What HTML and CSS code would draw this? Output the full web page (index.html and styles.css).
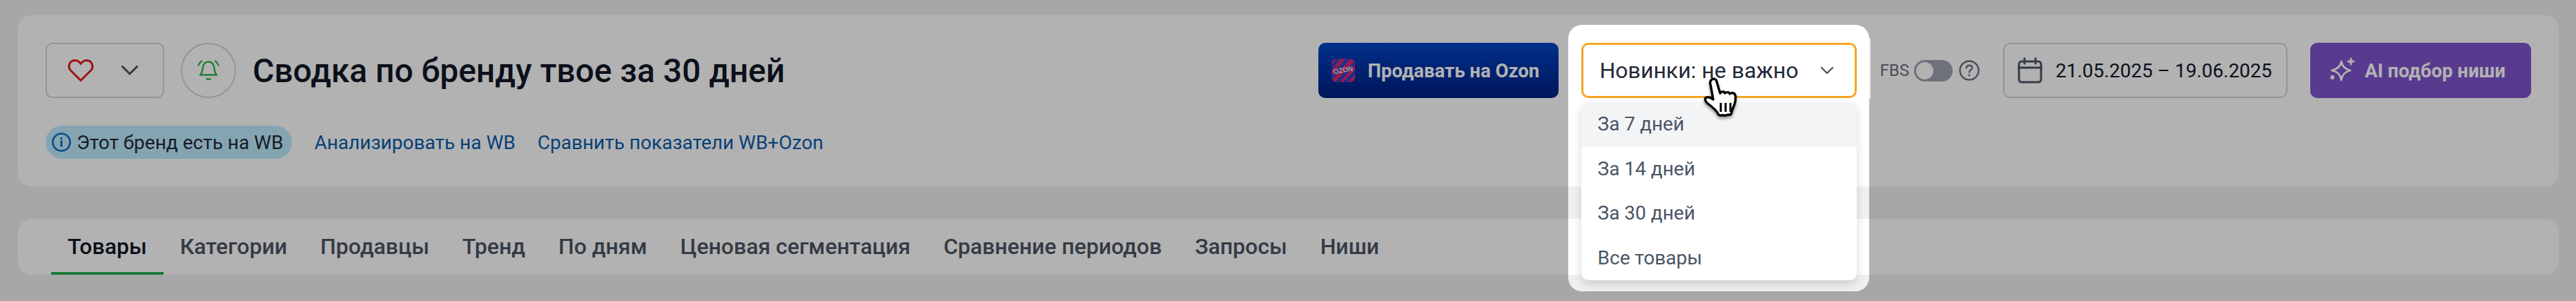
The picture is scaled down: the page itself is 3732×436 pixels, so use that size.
FILE: index.html
```html
<!DOCTYPE html>
<html lang="en">
<head>
    <meta charset="UTF-8">
    <meta name="viewport" content="width=device-width, initial-scale=1.0">
    <title>Сводка по бренду</title>
    <link rel="stylesheet" href="styles.css">
</head>
<body>
    <!-- Header card -->
    <div class="card header-card">
        <div class="top-row">
            <div class="fav-button">
                <svg class="heart" width="38" height="34" viewBox="0 0 38 34" fill="none"><path d="M19 31.500 4.500 17.200C-.5 12 2.500 3 10 2.500c4-.2 7 1.700 9 5 2-3.300 5-5.200 9-5 7.500.5 10.500 9.500 5.500 14.700Z" stroke="#e01b1b" stroke-width="3" stroke-linejoin="round"/></svg>
                <svg class="chev" width="24" height="14" viewBox="0 0 24 14" fill="none"><path d="M1.500 1.500 12 12 22.500 1.500" stroke="#4b5563" stroke-width="3" stroke-linecap="round" stroke-linejoin="round"/></svg>
            </div>
            <div class="bell-button">
                <svg width="32" height="32" viewBox="0 0 32 32" fill="none" stroke="#2cb84e" stroke-width="2.400" stroke-linecap="round" stroke-linejoin="round"><path d="M4 22.500h24c-2.500-2-3-5-3.500-9C24 7.500 21 3.500 16 3.500S8 7.500 7.500 13.500c-.5 4-1 7-3.500 9Z"/><path d="M13.500 28c1.500 1.200 3.500 1.200 5 0"/><path d="M6 2.500C3.800 4 2.500 6 1.500 8.500M26 2.500c2.200 1.500 3.500 3.500 4.500 6"/></svg>
            </div>
            <h1 class="title">Сводка по бренду твое за 30 дней</h1>
            <div class="actions">
                <div class="ozon-button">
                    <svg class="ozon-logo" width="36" height="34" viewBox="0 0 36 34"><rect x="1" y="0" width="34" height="34" rx="7" fill="#d02a70"/><path d="M8 0h6L1 16v-7ZM22 0h6L1 31v-7ZM34 4v6L13 34H7ZM35 17v6L24 34h-6Z" fill="#2a3fd0"/><text x="18" y="20" class="ozon-logo-text" transform="rotate(-10 18 17)">OZON</text></svg>
                    <span>Продавать на Ozon</span>
                </div>
                <div class="select-wrap">
                    <div class="spotlight"></div>
                    <div class="spot-edge"></div>
                    <div class="select-box">
                        <span>Новинки: не важно</span>
                        <svg width="20" height="12" viewBox="0 0 20 12" fill="none"><path d="M2 2l8 8 8-8" stroke="#4b5563" stroke-width="2.400" stroke-linecap="round" stroke-linejoin="round"/></svg>
                    </div>
                    <ul class="select-menu">
                        <li class="active">За 7 дней</li>
                        <li>За 14 дней</li>
                        <li>За 30 дней</li>
                        <li>Все товары</li>
                    </ul>
                    <svg class="hand-cursor" width="54" height="60" viewBox="0 0 54 60"><path d="M13 4c3-3 7-2 8 2l5 17c2-3 6-3 7 0 2-2 6-2 7 1 2-2 7-2 8 2 1 6-1 14-4 20-1 3-1 6-3 8-2 1-4-1-6 1-3 1-5-1-7 0-3 1-5-1-6-4-3-5-9-9-15-14-3-3-4-7 0-8 3-1 6 1 9 3L12 10c-1-2 0-5 1-6Z" fill="#fff" stroke="#000" stroke-width="3.400" stroke-linejoin="round"/><path d="M27 37v13M34 37v13M41 37v13" stroke="#000" stroke-width="3"/></svg>
                </div>
                <div class="fbs">
                    <span class="fbs-label">FBS</span>
                    <span class="toggle"><i></i></span>
                    <svg width="30" height="30" viewBox="0 0 30 30" fill="none"><circle cx="15" cy="15" r="13.500" stroke="#6b7280" stroke-width="2.400"/><path d="M10.800 11.500c.3-2.500 2-3.800 4.300-3.800 2.500 0 4.200 1.500 4.200 3.600 0 3-4.300 3-4.300 6.200" stroke="#6b7280" stroke-width="2.400" stroke-linecap="round"/><circle cx="15" cy="22" r="1.500" fill="#6b7280"/></svg>
                </div>
                <div class="date-button">
                    <svg width="36" height="38" viewBox="0 0 36 38" fill="none" stroke="#4b5563" stroke-width="3" stroke-linecap="round" stroke-linejoin="round"><rect x="2" y="6" width="32" height="30" rx="4"/><path d="M1 15h34M10 1.500V9M26 1.500V9"/></svg>
                    <span>21.05.2025 – 19.06.2025</span>
                </div>
                <div class="ai-button">
                    <svg width="40" height="38" viewBox="0 0 40 38" fill="none" stroke="#fff" stroke-width="2.800" stroke-linejoin="round" stroke-linecap="round"><path d="M18 6c1 7 5 11 13 13-8 2-12 6-13 14-1-8-5-12-14-14 9-2 13-6 14-13Z"/><path d="M32 2v8M28 6h8"/><circle cx="5" cy="29" r="1.500" fill="#fff"/></svg>
                    <span>AI подбор ниши</span>
                </div>
            </div>
        </div>
        <div class="links-row">
            <span class="pill">
                <svg width="28" height="28" viewBox="0 0 28 28" fill="none"><circle cx="14" cy="14" r="12.500" stroke="#0b6bc4" stroke-width="2.600"/><path d="M14 12.500v7" stroke="#0b6bc4" stroke-width="2.800" stroke-linecap="round"/><circle cx="14" cy="8.500" r="1.700" fill="#0b6bc4"/></svg>
                Этот бренд есть на WB
            </span>
            <a class="link">Анализировать на WB</a>
            <a class="link">Сравнить показатели WB+Ozon</a>
        </div>
    </div>

    <!-- Tabs -->
    <div class="card tabs-card">
        <span class="tab tab-active">Товары</span>
        <span class="tab">Категории</span>
        <span class="tab">Продавцы</span>
        <span class="tab">Тренд</span>
        <span class="tab">По дням</span>
        <span class="tab">Ценовая сегментация</span>
        <span class="tab">Сравнение периодов</span>
        <span class="tab">Запросы</span>
        <span class="tab">Ниши</span>
    </div>
</body>
</html>
```

FILE: styles.css
```css
html, body {
    height: 100%;
    overflow: hidden;
}
body {
    font-family: Roboto, "Liberation Sans", sans-serif;
    margin: 0;
    padding: 22px 25px 0 26px;
    box-sizing: border-box;
    background-color: #f0f0f0;
    color: #111827;
}
.card {
    background: white;
    border-radius: 20px;
}
.header-card {
    height: 248px;
    padding: 40px 40px 0;
    box-sizing: border-box;
}
.top-row {
    display: flex;
    align-items: center;
    height: 80px;
}
.fav-button {
    width: 172px;
    height: 80px;
    box-sizing: border-box;
    border: 2px solid #d1d5db;
    border-radius: 10px;
    display: flex;
    align-items: center;
    padding-left: 30px;
    gap: 40px;
}
.bell-button {
    width: 80px;
    height: 80px;
    box-sizing: border-box;
    margin-left: 24px;
    border: 2px solid #d1d5db;
    border-radius: 50%;
    display: flex;
    align-items: center;
    justify-content: center;
}
.title {
    margin: 0 0 0 24px;
    font-size: 48px;
    font-weight: 500;
    white-space: nowrap;
}
.actions {
    margin-left: auto;
    display: flex;
    align-items: center;
    flex-shrink: 0;
    white-space: nowrap;
}
.ozon-button {
    width: 348px;
    height: 80px;
    box-sizing: border-box;
    padding-left: 18px;
    border-radius: 10px;
    background: linear-gradient(#0044c8, #002080);
    color: white;
    font-size: 27.500px;
    font-weight: 700;
    display: flex;
    align-items: center;
    gap: 18px;
}
.ozon-logo-text {
    font-family: "Liberation Sans", sans-serif;
    font-size: 10px;
    font-weight: 700;
    fill: #e8e8e8;
    text-anchor: middle;
}
.select-wrap {
    position: relative;
    margin-left: 33px;
    width: 399px;
    height: 80px;
}
.spotlight {
    position: absolute;
    top: -26px;
    left: -19px;
    width: 436px;
    height: 386px;
    border-radius: 20px;
    box-shadow: 0 0 0 4000px rgba(0,0,0,0.3);
    z-index: 10;
}
.spot-edge {
    position: absolute;
    z-index: 11;
    top: -7px;
    left: 417px;
    width: 2px;
    height: 88px;
    background: #ececec;
}
.select-box {
    position: relative;
    z-index: 11;
    height: 80px;
    box-sizing: border-box;
    border: 3px solid #f5a623;
    border-radius: 10px;
    background: white;
    padding: 0 30px 0 24px;
    display: flex;
    align-items: center;
    justify-content: space-between;
    font-size: 32px;
    color: #1f2937;
}
.select-menu {
    position: absolute;
    z-index: 11;
    top: 86px;
    left: 0;
    right: 0;
    margin: 0;
    padding: 0;
    list-style: none;
    background: white;
    border-radius: 10px;
    overflow: hidden;
    box-shadow: 0 6px 14px rgba(0,0,0,0.15);
    font-size: 28px;
    color: #4b5563;
}
.select-menu li {
    height: 64.500px;
    line-height: 64.500px;
    padding-left: 24px;
}
.select-menu .active {
    background-color: #f3f4f6;
}
.hand-cursor {
    position: absolute;
    z-index: 12;
    left: 175px;
    top: 50px;
    filter: drop-shadow(0 3px 2px rgba(0,0,0,0.4));
}
.fbs {
    display: flex;
    align-items: center;
    margin-left: 34px;
    color: #6b7280;
}
.fbs-label {
    font-size: 24px;
}
.toggle {
    width: 56px;
    height: 31px;
    margin: 0 9px 0 7px;
    border-radius: 16px;
    background: #9ca3af;
    position: relative;
}
.toggle i {
    position: absolute;
    top: 3px;
    left: 3px;
    width: 25px;
    height: 25px;
    border-radius: 50%;
    background: white;
}
.date-button {
    width: 412px;
    height: 80px;
    box-sizing: border-box;
    margin-left: 34px;
    padding-left: 19px;
    border: 2px solid #d1d5db;
    border-radius: 10px;
    display: flex;
    align-items: center;
    gap: 19px;
    font-size: 28px;
}
.ai-button {
    width: 320px;
    height: 80px;
    box-sizing: border-box;
    margin-left: 33px;
    padding-left: 27px;
    border-radius: 10px;
    background: #7f54cc;
    color: white;
    font-size: 27.500px;
    font-weight: 700;
    display: flex;
    align-items: center;
    gap: 12px;
}
.links-row {
    display: flex;
    align-items: center;
    margin-top: 40px;
    font-size: 28px;
}
.pill {
    height: 48px;
    box-sizing: border-box;
    padding: 0 13px 0 9px;
    border-radius: 24px;
    background: #bfebff;
    display: flex;
    align-items: center;
    gap: 8px;
    color: #1f2937;
}
.link {
    margin-left: 32px;
    color: #0b5cad;
}
.tabs-card {
    margin-top: 47px;
    height: 81px;
    padding-left: 48px;
    display: flex;
    font-size: 32px;
    font-weight: 500;
    color: #4b5563;
}
.tab {
    padding: 0 24px;
    line-height: 80px;
    height: 81px;
    box-sizing: border-box;
}
.tab-active {
    color: #111827;
    border-bottom: 4px solid #25ae53;
}
```
